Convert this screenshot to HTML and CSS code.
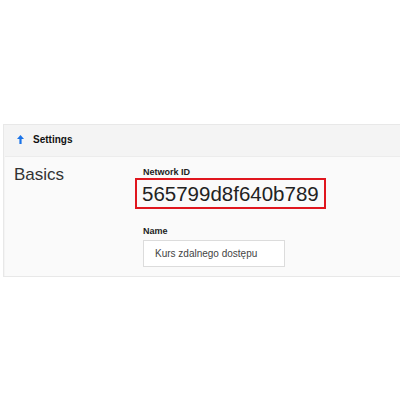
FILE: index.html
```html
<!DOCTYPE html>
<html lang="pl">
  <head>
    <title>Settings</title>
    <meta charset="utf-8" />
    <link rel="stylesheet" href="styles.css">
  </head>
  <body>
    <div class="panel">
      <div class="naglowek">
        <svg class="strzalka" width="7" height="9" viewBox="0 0 7 9">
          <path d="M3.5 0 L7 4 L4.6 4 L4.6 9 L2.4 9 L2.4 4 L0 4 Z" fill="#1a73e8" />
        </svg>
        <span>Settings</span>
      </div>
      <div class="tresc">
        <h2>Basics</h2>
        <div class="pola">
          <label>Network ID</label>
          <div class="siec">565799d8f640b789</div>
          <label>Name</label>
          <input type="text" value="Kurs zdalnego dostępu" />
        </div>
      </div>
    </div>
  </body>
</html>
```

FILE: styles.css
```css
body {
  margin: 0;
  padding: 124px 0 0 3px;
  background: #fff;
  font-family: "Liberation Sans", Arial, sans-serif;
  color: #222;
}

.panel {
  border: 1px solid #e8e8e8;
  border-right: none;
  background: #f4f4f4;
}

.naglowek {
  display: flex;
  align-items: center;
  height: 28px;
  padding: 0 0 2px 13px;
  font-size: 10px;
  font-weight: bold;
  color: #111;
}

.strzalka {
  margin-right: 9px;
}

.tresc {
  display: flex;
  margin: 1px 0 0 1px;
  height: 119px;
  background: #fafafa;
  border-top: 1px solid #ececec;
}

h2 {
  margin: 8px 0 0 9px;
  width: 121px;
  font-size: 17px;
  font-weight: normal;
  color: #333;
}

.pola {
  display: flex;
  flex-direction: column;
  align-items: flex-start;
  padding-top: 10px;
}

label {
  font-size: 9px;
  line-height: 10px;
  font-weight: bold;
  color: #222;
  margin-left: 8px;
}

.siec {
  margin-top: 1px;
  border: 2px solid #e0161e;
  padding: 0 5px;
  height: 27px;
  line-height: 28px;
  font-size: 20.5px;
  color: #222;
}

.siec + label {
  margin-top: 17px;
}

input {
  margin: 4px 0 0 8px;
  width: 142px;
  height: 27px;
  box-sizing: border-box;
  border: 1px solid #dcdcdc;
  background: #fff;
  padding: 0 11px;
  font-family: "Liberation Sans", Arial, sans-serif;
  font-size: 10px;
  color: #444;
}
```
